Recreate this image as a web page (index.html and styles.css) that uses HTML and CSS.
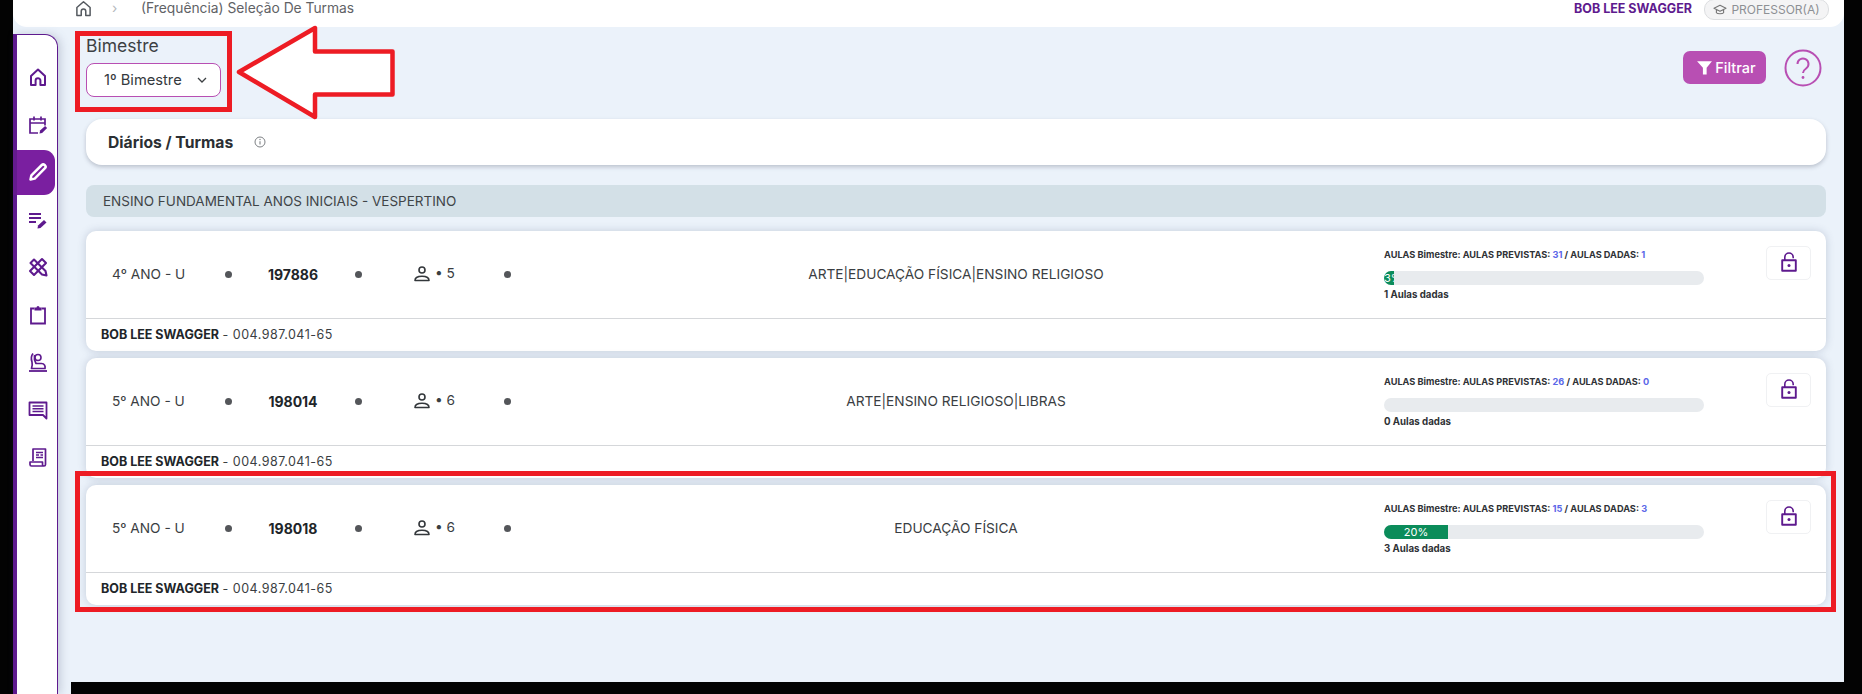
FILE: index.html
```html
<!DOCTYPE html>
<html lang="pt-BR">
<head>
<meta charset="utf-8">
<title>Seleção De Turmas</title>
<link rel="stylesheet" href="styles.css">
</head>
<body>
<svg class="sprite" width="0" height="0" aria-hidden="true">
  <symbol id="lock" viewBox="0 0 16 20"><path d="M1.200 8.200h13.600v10.600H1.200z" fill="none" stroke="currentColor" stroke-width="1.900" stroke-linejoin="round"/><path d="M3.800 8V5.200a4.200 4.200 0 0 1 8.400 0v1" fill="none" stroke="currentColor" stroke-width="1.600"/><circle cx="8" cy="13.500" r="1.500" fill="currentColor"/></symbol>
  <symbol id="person" viewBox="0 0 16 16"><circle cx="8" cy="4" r="3" fill="none" stroke="currentColor" stroke-width="1.600"/><path d="M1 14.500c0-3.400 2.600-4.300 7-4.300s7 .9 7 4.300z" fill="none" stroke="currentColor" stroke-width="1.600" stroke-linejoin="round"/></symbol>
</svg>
<div class="app">
  <div class="top-wrap">
    <header class="topbar">
      <nav class="crumbs">
        <svg class="crumb-home" viewBox="0 0 18 18"><path d="M2 8 9 1.800 16 8v8.500h-4.600v-4.600a2.400 2.400 0 0 0-4.800 0v4.600H2z" fill="none" stroke="currentColor" stroke-width="1.600" stroke-linejoin="round"/></svg>
        <span class="crumb-sep">›</span>
        <span>(Frequência) Seleção De Turmas</span>
      </nav>
      <div class="user">
        <strong class="user-name">BOB LEE SWAGGER</strong>
        <span class="role">
          <svg class="role-icon" viewBox="0 0 16 14"><path d="M8 1.500 1 5l7 3.500L15 5zM3.800 6.600v3.600c1.200 1.600 7.200 1.600 8.400 0V6.600" fill="none" stroke="currentColor" stroke-width="1.300" stroke-linejoin="round"/></svg>
          PROFESSOR(A)
        </span>
      </div>
    </header>
  </div>
  <div class="body-row">
    <div class="side-col">
      <aside class="sidebar">
        <a class="side-item"><svg viewBox="0 0 20 20"><path d="M3 9 10 2.500 17 9v9h-4.600v-4.400a2.400 2.400 0 0 0-4.800 0V18H3z" fill="none" stroke="currentColor" stroke-width="2" stroke-linejoin="round"/></svg></a>
        <a class="side-item"><svg viewBox="0 0 20 20"><path d="M10 18H2V4h15v6.500M2 8h15M6 1.500v4M13 1.500v4" fill="none" stroke="currentColor" stroke-width="1.700"/><path d="m11.500 18.500.6-3 5-4.500 2 2-5 5z" fill="currentColor"/></svg></a>
        <a class="side-item active"><svg viewBox="0 0 20 20"><path d="m2.500 17.500.9-4.200L13.800 3a2 2 0 0 1 2.800 0l.4.4a2 2 0 0 1 0 2.800L6.700 16.600z" fill="none" stroke="currentColor" stroke-width="2.500" stroke-linejoin="round"/></svg></a>
        <a class="side-item"><svg viewBox="0 0 20 20"><path d="M1 4h12M1 8h12M1 12h7" fill="none" stroke="currentColor" stroke-width="1.800"/><path d="m9.500 18.500.5-3 6-5.500 2.500 2.500-6 5.500z" fill="currentColor"/></svg></a>
        <a class="side-item"><svg viewBox="0 0 20 20"><path d="m2.500 6 3.500-3.500 11.500 11.500 1 4.500-4.500-1z" fill="none" stroke="currentColor" stroke-width="2.100" stroke-linejoin="round"/><path d="m14 2 4 4L6 18l-4-4z" fill="none" stroke="currentColor" stroke-width="2.100" stroke-linejoin="round"/></svg></a>
        <a class="side-item"><svg viewBox="0 0 20 20"><path d="M6.500 3.500H3v15h14v-15h-3.500" fill="none" stroke="currentColor" stroke-width="1.800"/><path d="M6.500 2.500h2a1.500 1.500 0 0 1 3 0h2v3h-7z" fill="currentColor"/></svg></a>
        <a class="side-item"><svg viewBox="0 0 20 20"><path d="M1 19h18" stroke="currentColor" stroke-width="1.800"/><circle cx="10" cy="5.500" r="3" fill="none" stroke="currentColor" stroke-width="1.600"/><path d="M5 1.500C3 4 3 7 4 10c.5 2 .3 4-.5 6.500h13.500c.5-2.500-.5-5-3.500-5H8C6.500 9 6 6 6.500 3" fill="none" stroke="currentColor" stroke-width="1.700" stroke-linejoin="round"/></svg></a>
        <a class="side-item"><svg viewBox="0 0 20 20"><path d="M1.500 2.500h17v16l-3.500-3.500H1.500z" fill="none" stroke="currentColor" stroke-width="1.800" stroke-linejoin="round"/><path d="M4.500 6h11M4.500 8.800h11M4.500 11.600h11" stroke="currentColor" stroke-width="1.500"/></svg></a>
        <a class="side-item"><svg viewBox="0 0 20 20"><path d="M5 14V2h12.500v15.500a1.500 1.500 0 0 1-3 0V15H2v2.500A1.500 1.500 0 0 0 3.500 19H16" fill="none" stroke="currentColor" stroke-width="1.700" stroke-linejoin="round"/><path d="M8 5.500h7M8 8h3M12.500 8H15M8 10.500h7" stroke="currentColor" stroke-width="1.300"/></svg></a>
      </aside>
    </div>
    <main class="main">
      <div class="filters">
        <div class="field">
          <label class="field-label">Bimestre</label>
          <div class="select">1º Bimestre
            <svg class="chev" viewBox="0 0 12 8"><path d="m2 2 4 4 4-4" fill="none" stroke="currentColor" stroke-width="1.300"/></svg>
          </div>
        </div>
        <div class="actions">
          <button class="btn-filter">
            <svg class="funnel" viewBox="0 0 16 16"><path d="M1 2h14L10 8.200v6.300H6.500V8.200z" fill="#fff"/></svg>
            Filtrar
          </button>
          <svg class="help" viewBox="0 0 38 38"><circle cx="19" cy="19" r="17.500" fill="none" stroke="currentColor" stroke-width="2"/><path d="M13.500 15a5.500 5.500 0 1 1 8.600 4.500c-2 1.400-3.100 2.300-3.100 4.500" fill="none" stroke="currentColor" stroke-width="2"/><circle cx="19" cy="28.500" r="1.400" fill="currentColor"/></svg>
        </div>
      </div>

      <section class="title-card">
        <h2 class="title">Diários / Turmas</h2>
        <svg class="info" viewBox="0 0 12 12"><circle cx="6" cy="6" r="5" fill="none" stroke="currentColor"/><path d="M6 5.200v3.300" stroke="currentColor" stroke-width="1.100"/><circle cx="6" cy="3.500" r=".7" fill="currentColor"/></svg>
      </section>

      <div class="group">ENSINO FUNDAMENTAL ANOS INICIAIS - VESPERTINO</div>

      <div class="cards">
        <article class="card">
          <div class="card-row">
            <div class="c-class">4º ANO - U</div>
            <i class="dot"></i>
            <div class="c-code">197886</div>
            <i class="dot"></i>
            <div class="c-users"><svg class="person"><use href="#person"/></svg><span>• 5</span></div>
            <i class="dot"></i>
            <div class="c-disc">ARTE|EDUCAÇÃO FÍSICA|ENSINO RELIGIOSO</div>
            <div class="c-prog">
              <p class="prog-title">AULAS Bimestre: AULAS PREVISTAS: <b>31</b> / AULAS DADAS: <b>1</b></p>
              <div class="bar"><div class="bar-fill" style="width:3.200%">3%</div></div>
              <p class="prog-cap">1 Aulas dadas</p>
            </div>
            <button class="lock"><svg><use href="#lock"/></svg></button>
          </div>
          <footer class="card-foot"><strong>BOB LEE SWAGGER</strong> <span class="cpf">- 004.987.041-65</span></footer>
        </article>

        <article class="card">
          <div class="card-row">
            <div class="c-class">5º ANO - U</div>
            <i class="dot"></i>
            <div class="c-code">198014</div>
            <i class="dot"></i>
            <div class="c-users"><svg class="person"><use href="#person"/></svg><span>• 6</span></div>
            <i class="dot"></i>
            <div class="c-disc">ARTE|ENSINO RELIGIOSO|LIBRAS</div>
            <div class="c-prog">
              <p class="prog-title">AULAS Bimestre: AULAS PREVISTAS: <b>26</b> / AULAS DADAS: <b>0</b></p>
              <div class="bar"></div>
              <p class="prog-cap">0 Aulas dadas</p>
            </div>
            <button class="lock"><svg><use href="#lock"/></svg></button>
          </div>
          <footer class="card-foot"><strong>BOB LEE SWAGGER</strong> <span class="cpf">- 004.987.041-65</span></footer>
        </article>

        <article class="card">
          <div class="card-row">
            <div class="c-class">5º ANO - U</div>
            <i class="dot"></i>
            <div class="c-code">198018</div>
            <i class="dot"></i>
            <div class="c-users"><svg class="person"><use href="#person"/></svg><span>• 6</span></div>
            <i class="dot"></i>
            <div class="c-disc">EDUCAÇÃO FÍSICA</div>
            <div class="c-prog">
              <p class="prog-title">AULAS Bimestre: AULAS PREVISTAS: <b>15</b> / AULAS DADAS: <b>3</b></p>
              <div class="bar"><div class="bar-fill" style="width:20%">20%</div></div>
              <p class="prog-cap">3 Aulas dadas</p>
            </div>
            <button class="lock"><svg><use href="#lock"/></svg></button>
          </div>
          <footer class="card-foot"><strong>BOB LEE SWAGGER</strong> <span class="cpf">- 004.987.041-65</span></footer>
        </article>
      </div>
    </main>
  </div>

  <div class="mark mark-field"></div>
  <div class="mark mark-card"></div>
  <svg class="arrow" viewBox="0 0 170 104"><path d="M5 47 81 3v23.500h77.500v43H81V92z" fill="#fff" stroke="#ed1c24" stroke-width="4.500" stroke-linejoin="round"/></svg>
</div>
</body>
</html>
```

FILE: styles.css
```css
* { box-sizing: border-box; }

html, body {
  margin: 0;
  height: 694px;
  overflow: hidden;
  background: #030303;
}

body {
  font-family: Inter, "Open Sans", "Liberation Sans", sans-serif;
  color: #2b2f33;
}

.sprite { position: absolute; }

.app {
  position: relative;
  width: 1831px;
  height: 694px;
  margin-left: 13px;
  display: flex;
  flex-direction: column;
}

/* top bar */
.top-wrap { flex: none; background: #ebf2fa; }

.topbar {
  height: 27px;
  background: #fff;
  border-radius: 0 0 14px 14px;
  display: flex;
  justify-content: space-between;
  padding: 0 15px 0 62px;
}

.crumbs {
  display: flex;
  align-items: flex-start;
  height: 18px;
  font-size: 13.800px;
  line-height: 17px;
  color: #5f6266;
}

.crumb-home { width: 17px; height: 17px; color: #555a60; }
.crumb-sep { margin: 0 21px 0 20px; color: #b5b8bc; width: 8px; }

.user { display: flex; align-items: flex-start; }

.user-name {
  font-size: 12.500px;
  line-height: 17px;
  color: #5e1a8e;
  font-weight: 700;
  margin-right: 12px;
}

.role {
  display: flex;
  align-items: center;
  gap: 4px;
  height: 21px;
  width: 125px;
  margin-top: -1px;
  justify-content: center;
  background: #f4f4f5;
  border: 1px solid #dcdee0;
  border-radius: 10px;
  font-size: 12px;
  color: #8d9094;
}

.role-icon { width: 14px; height: 12px; color: #777; }

/* body */
.body-row { flex: 1; display: flex; min-height: 0; }

.side-col {
  width: 58px;
  flex: none;
  background: #ebf2fa;
  padding: 7px 13px 0 0;
}

.sidebar {
  height: 100%;
  background: #fff;
  border-left: 4px solid #5e1a8e;
  border-right: 1px solid #5e1a8e;
  border-top: 1px solid #5e1a8e;
  border-radius: 0 13px 0 0;
  padding-top: 19.500px;
  box-shadow: 3px 0 8px rgba(90, 100, 130, .25);
  display: flex;
  flex-direction: column;
  gap: 2.500px;
}

.side-item {
  display: flex;
  align-items: center;
  justify-content: center;
  height: 45px;
  width: 38px;
  padding-left: 3px;
  color: #5e1a8e;
  border-radius: 0 11px 11px 0;
}

.side-item svg { width: 20px; height: 20px; }

.side-item.active {
  background: #7a1fa0;
  color: #fff;
  box-shadow: -4px 0 0 #651b8f;
}

.main {
  flex: none;
  width: 1773px;
  height: 655px;
  background: #ebf2fa;
  padding: 0 18px 0 15px;
  display: flex;
  flex-direction: column;
}

.filters {
  display: flex;
  justify-content: space-between;
  height: 92px;
  flex: none;
}

.field { padding-top: 9px; }

.field-label {
  display: block;
  font-size: 17.500px;
  line-height: 20px;
  color: #3c4043;
  margin-bottom: 7px;
}

.select {
  width: 135px;
  height: 34px;
  background: #fff;
  border: 1px solid #b84fb3;
  border-radius: 8px;
  font-size: 14.700px;
  line-height: 32px;
  padding-left: 17px;
  color: #35393d;
  position: relative;
  display: flex;
  justify-content: space-between;
  align-items: center;
  padding-right: 12px;
}

.chev { width: 12px; height: 8px; color: #3c4043; }

.actions {
  display: flex;
  align-items: flex-start;
  padding: 22px 4px 0 0;
  gap: 18px;
}

.btn-filter {
  width: 83px;
  height: 33px;
  margin-top: 2px;
  border: 0;
  border-radius: 7px;
  background: #b84fb3;
  color: #fff;
  font: 500 14.500px Inter, sans-serif;
  display: flex;
  align-items: center;
  justify-content: center;
  gap: 2px;
  padding: 0 0 0 3px;
}

.funnel { width: 17px; height: 17px; }
.help { width: 38px; height: 38px; color: #b84fb3; }

.title-card {
  height: 46px;
  flex: none;
  background: #fff;
  border-radius: 16px;
  box-shadow: 0 2px 4px rgba(60, 70, 90, .28);
  display: flex;
  align-items: center;
  padding-left: 22px;
  gap: 21px;
}

.title { margin: 0; font-size: 15.700px; font-weight: 700; color: #2b2f33; }
.info { width: 12px; height: 12px; color: #7d8084; }

.group {
  height: 32px;
  flex: none;
  margin-top: 20px;
  margin-bottom: 14px;
  background: #d3e0e7;
  border-radius: 8px;
  padding-left: 17px;
  font-size: 13.500px;
  line-height: 32px;
  color: #3f4447;
}

.cards { display: flex; flex-direction: column; gap: 7px; }

.card {
  height: 120px;
  background: #fff;
  border-radius: 10px;
  box-shadow: 0 0 8px rgba(60, 75, 110, .22);
  display: flex;
  flex-direction: column;
}

.card-row {
  height: 88px;
  flex: none;
  display: grid;
  grid-template-columns: 133px 18px 112px 18px 131px 18px 868px 382px 45px;
  border-bottom: 1px solid #d5d7da;
  padding-bottom: 1px;
  align-items: center;
  font-size: 13.700px;
  color: #3a3e42;
}

.c-class { padding-left: 26px; }
.c-code { text-align: center; font-weight: 700; font-size: 14px; color: #212529; }

.dot {
  width: 7px;
  height: 7px;
  border-radius: 50%;
  background: #54565a;
  justify-self: center;
}

.c-users {
  display: flex;
  align-items: center;
  padding-left: 47px;
  gap: 5px;
  margin-top: -2px;
}

.person { width: 16px; height: 16px; color: #33373b; margin-top: 1px; }

.c-disc { text-align: center; padding-left: 12px; }

.c-prog { align-self: start; padding-top: 18px; }

.prog-title {
  margin: 0 0 10px;
  font-size: 9.200px;
  line-height: 12px;
  font-weight: 700;
  color: #2f3236;
}

.prog-title b { color: #5b67e8; font-weight: 700; }

.bar {
  width: 320px;
  height: 14px;
  background: #e8ebee;
  border-radius: 7px;
  overflow: hidden;
}

.bar-fill {
  height: 14px;
  background: #0b8c5a;
  color: #fff;
  font-size: 11px;
  line-height: 14px;
  text-align: center;
  overflow: hidden;
}

.prog-cap {
  margin: 4px 0 0;
  font-size: 9.700px;
  line-height: 12px;
  font-weight: 700;
  color: #2f3236;
}

.lock {
  align-self: start;
  width: 45px;
  height: 34px;
  margin-top: 15px;
  padding: 0 0 3px;
  background: #fff;
  border: 1px solid #f0f1f3;
  border-radius: 5px;
  color: #5e1a8e;
  display: flex;
  align-items: center;
  justify-content: center;
}

.lock svg { width: 16px; height: 20px; }

.card-foot {
  flex: 1;
  padding-left: 15px;
  font-size: 12.500px;
  line-height: 31px;
  color: #3a3e42;
}

.card-foot strong { color: #212529; font-weight: 700; }
.cpf { letter-spacing: .5px; }

/* annotations drawn over the screenshot */
.mark { position: absolute; border: 5px solid #ed1c24; z-index: 3; }
.mark-field { left: 62px; top: 31px; width: 157px; height: 81px; }
.mark-card { left: 62px; top: 471px; width: 1761px; height: 141px; }
.arrow { position: absolute; left: 221px; top: 25px; width: 170px; height: 104px; z-index: 3; }
```
